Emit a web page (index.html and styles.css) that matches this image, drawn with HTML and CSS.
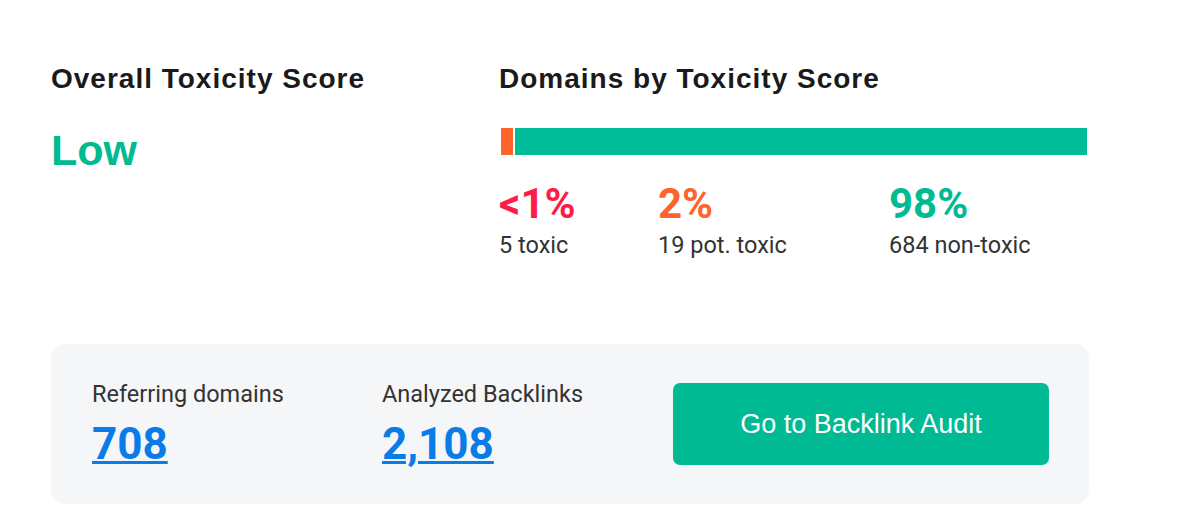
FILE: index.html
```html
<!DOCTYPE html>
<html lang="en">
<head>
    <meta charset="UTF-8">
    <meta name="viewport" content="width=device-width, initial-scale=1.0">
    <title>Backlink Toxicity</title>
    <link rel="stylesheet" href="styles.css">
</head>
<body>
    <div class="widget">
        <div class="scores">
            <div class="overall">
                <h2 class="title">Overall Toxicity Score</h2>
                <div class="level">Low</div>
            </div>

            <div class="domains">
                <h2 class="title">Domains by Toxicity Score</h2>
                <div class="bar">
                    <span class="bar-part potential" style="width: 12px"></span>
                    <span class="bar-part safe"></span>
                </div>
                <div class="stats">
                    <div class="stat col-toxic">
                        <div class="percent toxic">&lt;1%</div>
                        <div class="label">5 toxic</div>
                    </div>
                    <div class="stat col-potential">
                        <div class="percent potential">2%</div>
                        <div class="label">19 pot. toxic</div>
                    </div>
                    <div class="stat">
                        <div class="percent safe">98%</div>
                        <div class="label">684 non-toxic</div>
                    </div>
                </div>
            </div>
        </div>

        <div class="summary">
            <div class="metric">
                <div class="metric-name">Referring domains</div>
                <a class="metric-value" href="#">708</a>
            </div>
            <div class="metric">
                <div class="metric-name">Analyzed Backlinks</div>
                <a class="metric-value" href="#">2,108</a>
            </div>
            <a class="audit-btn" href="#">Go to Backlink Audit</a>
        </div>
    </div>
</body>
</html>
```

FILE: styles.css
```css
body {
    margin: 0;
    padding: 0;
    background-color: #fff;
    font-family: Roboto, "Liberation Sans", Arial, sans-serif;
    color: #333;
}

.widget {
    width: 1038px;
    padding: 62px 0 0 51px;
}

.scores {
    display: flex;
}

.title {
    margin: 0;
    font-family: "Liberation Sans", Arial, sans-serif;
    font-size: 28px;
    font-weight: bold;
    letter-spacing: 1px;
    line-height: 34px;
    color: #1a1a1a;
}

.overall {
    width: 448px;
}

.level {
    margin-top: 29px;
    font-family: "Liberation Sans", Arial, sans-serif;
    font-size: 43px;
    font-weight: bold;
    line-height: 50px;
    color: #00ba94;
}

.domains {
    width: 588px;
}

.bar {
    display: flex;
    gap: 2px;
    height: 27px;
    margin-top: 32px;
    padding-left: 2px;
}

.bar-part.potential {
    background-color: #ff642d;
}

.bar-part.safe {
    flex: 1;
    background-color: #00bc99;
}

.stats {
    display: flex;
    margin-top: 27px;
}

.col-toxic {
    width: 159px;
}

.col-potential {
    width: 231px;
}

.percent {
    font-size: 42px;
    font-weight: bold;
    line-height: 44px;
}

.percent.toxic {
    color: #ff1b4a;
}

.percent.potential {
    color: #ff642d;
}

.percent.safe {
    color: #00ba94;
}

.label {
    margin-top: 5px;
    font-size: 23.5px;
    line-height: 28px;
    color: #333;
}

.summary {
    display: flex;
    align-items: center;
    height: 160px;
    margin-top: 85px;
    padding: 0 40px 0 41px;
    background-color: #f5f6f8;
    border-radius: 14px;
    box-sizing: border-box;
}

.metric {
    width: 290px;
    margin-top: -2px;
}

.metric-name {
    font-size: 23.5px;
    line-height: 28px;
    color: #333;
}

.metric-value {
    display: inline-block;
    margin-top: 13px;
    font-size: 44px;
    font-weight: bold;
    line-height: 46px;
    color: #0a7ce8;
    text-decoration: underline;
    text-decoration-thickness: 3px;
}

.audit-btn {
    display: flex;
    align-items: center;
    justify-content: center;
    width: 376px;
    height: 82px;
    margin-left: auto;
    background-color: #00ba94;
    border-radius: 7px;
    font-family: "Liberation Sans", Arial, sans-serif;
    font-size: 27px;
    color: #fff;
    text-decoration: none;
}
```
